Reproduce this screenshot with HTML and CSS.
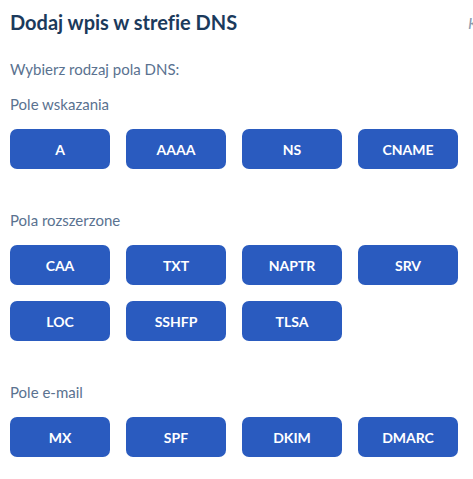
FILE: index.html
```html
<!DOCTYPE html>
<html lang="pl">
<head>
<meta charset="utf-8">
<title>Dodaj wpis w strefie DNS</title>
<link rel="stylesheet" href="styles.css">
</head>
<body>
<div class="panel">
  <header class="head">
    <h1 class="title">Dodaj wpis w strefie DNS</h1>
    <span class="side">K</span>
  </header>
  <p class="intro">Wybierz rodzaj pola DNS:</p>

  <section class="group">
    <h2 class="label">Pole wskazania</h2>
    <div class="grid">
      <button class="btn">A</button>
      <button class="btn">AAAA</button>
      <button class="btn">NS</button>
      <button class="btn">CNAME</button>
    </div>
  </section>

  <section class="group">
    <h2 class="label">Pola rozszerzone</h2>
    <div class="grid">
      <button class="btn">CAA</button>
      <button class="btn">TXT</button>
      <button class="btn">NAPTR</button>
      <button class="btn">SRV</button>
      <button class="btn">LOC</button>
      <button class="btn">SSHFP</button>
      <button class="btn">TLSA</button>
    </div>
  </section>

  <section class="group">
    <h2 class="label">Pole e-mail</h2>
    <div class="grid">
      <button class="btn">MX</button>
      <button class="btn">SPF</button>
      <button class="btn">DKIM</button>
      <button class="btn">DMARC</button>
    </div>
  </section>
</div>
</body>
</html>
```
FILE: styles.css
```css
html, body {
  margin: 0;
  padding: 0;
  background: #ffffff;
}
body {
  font-family: Lato, "Liberation Sans", sans-serif;
  font-variant-ligatures: none;
  overflow: hidden;
}
.panel {
  padding: 7px 0 0 10px;
}
.head {
  display: flex;
  justify-content: space-between;
  align-items: center;
  height: 30px;
  overflow: hidden;
}
.title {
  margin: 0;
  font-size: 20px;
  font-weight: 700;
  color: #1b3a5c;
  line-height: 30px;
  white-space: nowrap;
}
.side {
  font-size: 16px;
  font-style: italic;
  color: #8a9bb0;
  width: 5px;
  overflow: hidden;
  white-space: nowrap;
}
.intro {
  margin: 22px 0 0 0;
  font-size: 15px;
  color: #5a7290;
  line-height: 20px;
}
.label {
  margin: 0;
  font-size: 15px;
  font-weight: 400;
  color: #5a7290;
  line-height: 20px;
}
.group {
  margin-top: 41px;
}
.group:first-of-type {
  margin-top: 15px;
}
.grid {
  display: grid;
  grid-template-columns: repeat(4, 100px);
  gap: 16px;
  margin-top: 15px;
}
.btn {
  height: 40px;
  border: none;
  border-radius: 7px;
  background: #2a5bbf;
  color: #ffffff;
  font-family: Lato, "Liberation Sans", sans-serif;
  font-variant-ligatures: none;
  font-size: 14px;
  font-weight: 700;
  padding: 0;
}
```
